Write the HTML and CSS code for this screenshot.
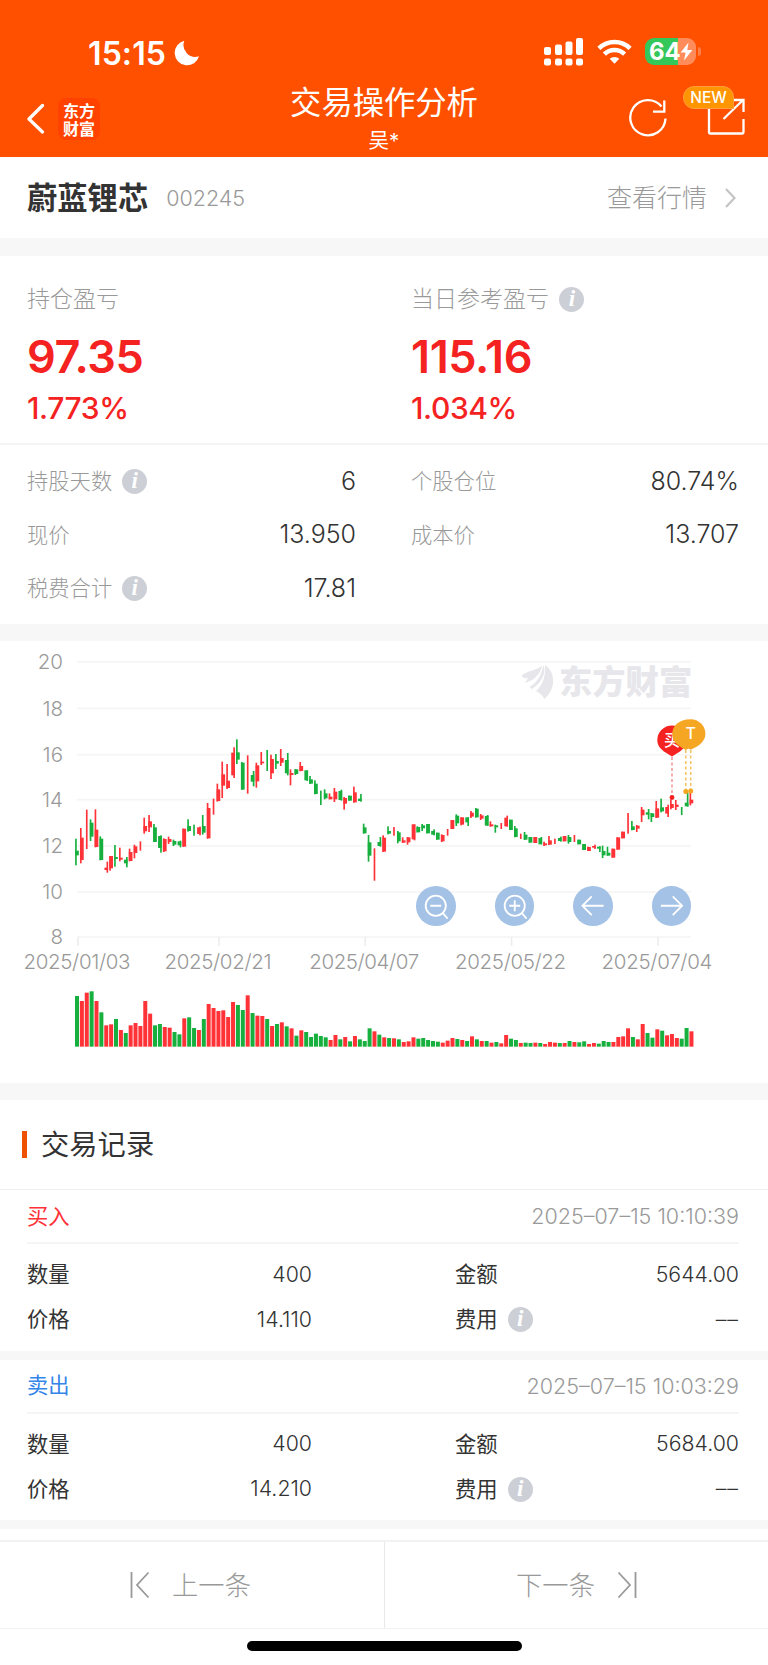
FILE: index.html
```html
<!DOCTYPE html>
<html lang="zh-CN">
<head>
  <meta charset="UTF-8">
  <meta name="viewport" content="width=device-width, initial-scale=1">
  <title>交易操作分析</title>
  <link rel="stylesheet" href="styles.css">
</head>
<body>
  <!-- 顶部 -->
  <header class="header">
    <div class="statusbar">
      <div class="clock">
        <span>15:15</span>
        <svg width="26" height="26" viewBox="0 0 26 26"><path fill="#fff" d="M10.3 .8A12.4 12.4 0 1 0 25 16.2 11.8 11.8 0 0 1 10.3 .8z"/></svg>
      </div>
      <div class="status-icons">
        <svg width="40" height="28" viewBox="0 0 40 28" fill="#fff">
          <rect x="0" y="9" width="7" height="8" rx="2"/><rect x="11" y="6.5" width="7" height="10.5" rx="2"/>
          <rect x="21.5" y="3.5" width="7" height="13.5" rx="2"/><rect x="32" y="0" width="7" height="17" rx="2"/>
          <rect x="0" y="20.5" width="7" height="7" rx="2"/><rect x="11" y="20.5" width="7" height="7" rx="2"/>
          <rect x="21.5" y="20.5" width="7" height="7" rx="2"/><rect x="32" y="20.5" width="7" height="7" rx="2"/>
        </svg>
        <svg class="wifi" width="35" height="26" viewBox="0 0 36 27" fill="none" stroke="#fff" stroke-width="4.6">
          <path d="M1.800 9.800a23 23 0 0 1 32.400 0"/><path d="M7.500 15.700a15 15 0 0 1 21 0"/>
          <path d="M18 25.600l-5-5a7.300 7.300 0 0 1 10 0z" fill="#fff" stroke="none"/>
        </svg>
        <div class="battery">
          <span class="battery-num">64</span>
          <svg width="13" height="19" viewBox="0 0 13 19"><path fill="#fff" d="M8.500 .5L.6 10.600h5L4 18.500l8.400-10.400H7.300z"/></svg>
        </div>
      </div>
    </div>
    <div class="navbar">
      <div class="nav-left">
        <svg width="18" height="32" viewBox="0 0 18 32" fill="none" stroke="#fff" stroke-width="3.2" stroke-linecap="round" stroke-linejoin="round"><path d="M15.500 2.500L2 16l13.500 13"/></svg>
        <div class="app-logo">东方财富</div>
      </div>
      <div class="nav-title">
        <h1>交易操作分析</h1>
        <p>吴*</p>
      </div>
      <div class="nav-right">
        <svg width="38" height="40" viewBox="0 0 38 40" fill="none" stroke="#fff" stroke-width="2.3">
          <path d="M36.500 20.500A17.600 17.600 0 1 1 32.500 8.500"/><path d="M35.300 2.500v11.200H24" />
        </svg>
        <div class="share">
          <svg width="38" height="38" viewBox="0 0 38 38" fill="none" stroke="#fff" stroke-width="2.3">
            <path d="M2 5v29q0 1.500 1.500 1.500h32q1 0 1-1.500V21"/><path d="M16.500 21L36 2"/><path d="M24 2h12.500v12"/>
          </svg>
          <span class="badge">NEW</span>
        </div>
      </div>
    </div>
  </header>

  <!-- 股票 -->
  <section class="stock">
    <h2>蔚蓝锂芯</h2>
    <span class="code">002245</span>
    <a class="more"><span>查看行情</span>
      <svg width="11" height="20" viewBox="0 0 11 20" fill="none" stroke="#c4c4c4" stroke-width="2.2"><path d="M1 1l8.500 9L1 19"/></svg>
    </a>
  </section>

  <!-- 盈亏 -->
  <section class="profit">
    <div class="profit-col">
      <div class="label">持仓盈亏</div>
      <div class="amount">97.35</div>
      <div class="rate">1.773%</div>
    </div>
    <div class="profit-col">
      <div class="label">当日参考盈亏 <i class="info">i</i></div>
      <div class="amount">115.16</div>
      <div class="rate">1.034%</div>
    </div>
  </section>
  <section class="details">
    <div class="pair"><span class="key">持股天数 <i class="info">i</i></span><span>6</span></div>
    <div class="pair"><span class="key">个股仓位</span><span>80.74%</span></div>
    <div class="pair"><span class="key">现价</span><span>13.950</span></div>
    <div class="pair"><span class="key">成本价</span><span>13.707</span></div>
    <div class="pair"><span class="key">税费合计 <i class="info">i</i></span><span>17.81</span></div>
  </section>

  <!-- K线图 -->
  <section class="chart">
    <svg id="kline" width="768" height="420" viewBox="0 0 768 420">
      <g id="grid"></g>
      <g class="watermark">
        <path d="M521.500 25.500c7-5 15-5.500 20.500-9.500-1.500 8-9 16-17.500 16.500 2.500-1.800 3.500-3.300 3-4.500-2 .4-5 .2-6-2.500z"/>
        <path d="M543.500 15c3 8-2 19-13.500 25 3-1.500-1-2.500 0-3.500 7-3 12-13 13.500-21.500z" />
        <path d="M545 15c6 4 9 11 8 19-1 6-4 11-8.500 15-2-4-5-6-8.500-8 6-5 10-14 9-26z"/>
        <text x="559" y="44">东方财富</text>
      </g>
      <g id="candles" transform="scale(.33333)"></g>
      <g id="volume" transform="scale(.33333)"></g>
      <g class="pin-buy">
        <path class="leader" d="M672 107v40"/>
        <circle cx="672" cy="147.500" r="2.400"/>
        <path d="M672 75.500a14.700 14.700 0 0 1 14.700 14.700c0 8-7 11.500-14.700 16.300-7.700-4.800-14.700-8.300-14.700-16.300A14.700 14.700 0 0 1 672 75.500z"/>
        <text x="672" y="96">买</text>
      </g>
      <g class="pin-t">
        <path class="leader" d="M685.800 100v40M690.700 100v40"/>
        <circle cx="685.800" cy="141.500" r="2.500"/><circle cx="690.700" cy="141" r="2.500"/>
        <path d="M690.700 69.200a14.700 14.700 0 0 1 14.700 14.700c0 7-6 11.500-11.900 14.400l-2.600 1.500-2.500-1.200-2.600 1.400c-4-3-13.600-6.500-13.600-15.600 0-8 6-15.200 18.500-15.200z"/>
        <text x="690.700" y="89">T</text>
      </g>
    </svg>
    <div class="tools">
      <button><svg viewBox="0 0 40 40"><circle cx="20" cy="20" r="10.200"/><path d="M27.200 27.500l4.800 5.500M14.500 20h11"/></svg></button>
      <button><svg viewBox="0 0 40 40"><circle cx="20" cy="20" r="10.200"/><path d="M27.200 27.500l4.800 5.500M14.500 20h11M20 14.500v11"/></svg></button>
      <button><svg viewBox="0 0 40 40"><path d="M31 20H9.500M19 10.500L9.500 20l9.500 9.500"/></svg></button>
      <button><svg viewBox="0 0 40 40"><path d="M9 20h21.500M21 10.500l9.500 9.500-9.500 9.500"/></svg></button>
    </div>
  </section>

  <!-- 交易记录 -->
  <section class="records">
    <h3><span>交易记录</span></h3>
    <article class="record">
      <div class="record-head"><span class="buy">买入</span><time>2025–07–15 10:10:39</time></div>
      <div class="record-body">
        <div class="pair"><span class="key">数量</span><span>400</span></div>
        <div class="pair"><span class="key">金额</span><span>5644.00</span></div>
        <div class="pair"><span class="key">价格</span><span>14.110</span></div>
        <div class="pair"><span class="key">费用 <i class="info">i</i></span><span class="empty">––</span></div>
      </div>
    </article>
    <article class="record">
      <div class="record-head"><span class="sell">卖出</span><time>2025–07–15 10:03:29</time></div>
      <div class="record-body">
        <div class="pair"><span class="key">数量</span><span>400</span></div>
        <div class="pair"><span class="key">金额</span><span>5684.00</span></div>
        <div class="pair"><span class="key">价格</span><span>14.210</span></div>
        <div class="pair"><span class="key">费用 <i class="info">i</i></span><span class="empty">––</span></div>
      </div>
    </article>
  </section>

  <footer class="pager">
    <a><svg width="20" height="28" viewBox="0 0 20 28"><path d="M1.500 1v26M18.500 1.500L7 14l11.500 12.500"/></svg><span>上一条</span></a>
    <a><span>下一条</span><svg width="20" height="28" viewBox="0 0 20 28"><path d="M18.500 1v26M1.500 1.500L13 14 1.500 26.500"/></svg></a>
  </footer>
  <div class="home-indicator"></div>

  <script src="chart.js"></script>
</body>
</html>
```

FILE: styles.css
```css
:root {
  --primary: #ff5000;
  --red: #f52222;
  --text: #333;
  --gray: #999;
  --line: #f5f5f5;
  --band: #f7f7f7;
}
* { box-sizing: border-box; }
html, body {
  margin: 0;
  padding: 0;
  font-family: Inter, "Noto Sans CJK SC", sans-serif;
  font-weight: 300;
  background: #fff;
  color: var(--text);
}
body {
  width: 768px;
  height: 1665px;
  overflow: hidden;
}
h1, h2, h3, p { margin: 0; }

/* ───────── 顶部 ───────── */
.header {
  height: 157px;
  padding-top: 36px;
  background: var(--primary);
  color: #fff;
}
.statusbar {
  display: flex;
  justify-content: space-between;
  height: 34px;
  padding: 0 72px 0 88px;
}
.clock {
  display: flex;
  align-items: center;
  gap: 8px;
  font-size: 32px;
  font-weight: 600;
  letter-spacing: 0.1px;
}
.status-icons {
  display: flex;
  align-items: center;
  height: 31px;
}
.wifi { margin: 0 13px; }
.battery {
  position: relative;
  display: flex;
  align-items: center;
  width: 51px;
  height: 27px;
  padding-left: 4px;
  border-radius: 9px;
  background: linear-gradient(90deg, #34c759 64%, #ff8c5a 64%);
}
.battery::after {
  content: "";
  position: absolute;
  left: 53px;
  top: 9px;
  width: 3px;
  height: 9px;
  border-radius: 0 3px 3px 0;
  background: #ff7d47;
}
.battery-num {
  font-size: 24px;
  font-weight: 700;
  letter-spacing: -0.2px;
}
.navbar {
  display: grid;
  grid-template-columns: 1fr 220px 1fr;
  height: 87px;
}
.nav-left {
  display: flex;
  align-items: center;
  gap: 13px;
  height: 97px;
  padding-left: 27px;
}
.app-logo {
  width: 42px;
  height: 42px;
  padding: 3px 5px;
  border-radius: 8px;
  background: #ff4200;
  font-family: "Noto Sans CJK SC", sans-serif;
  font-size: 16px;
  font-weight: 700;
  line-height: 18px;
  word-break: break-all;
}
.nav-title {
  padding-top: 10px;
  text-align: center;
}
.nav-title h1 {
  margin: 0 -5px;
  font-size: 31.3px;
  font-weight: 400;
  line-height: 46px;
}
.nav-title p {
  font-size: 20.5px;
  font-weight: 400;
  line-height: 30px;
}
.nav-right {
  display: flex;
  justify-content: flex-end;
  gap: 40px;
  padding: 28px 23px 0 0;
}
.share { position: relative; }
.badge {
  position: absolute;
  left: -24px;
  top: -12px;
  width: 51px;
  height: 23px;
  border: 1px solid #ff9c3c;
  border-radius: 11px 11px 0 11px;
  background: #ff9500;
  font-size: 15.5px;
  font-weight: 500;
  line-height: 22px;
  text-align: center;
}

/* ───────── 股票 ───────── */
.stock {
  display: flex;
  align-items: center;
  height: 99px;
  padding: 0 32px 0 27px;
  border-bottom: 18px solid var(--band);
}
.stock h2 {
  padding-bottom: 4px;
  font-size: 30.3px;
  font-weight: 700;
}
.code {
  margin-left: 18px;
  font-size: 21.5px;
}
.code, .more { color: var(--gray); }
.more {
  display: flex;
  align-items: center;
  gap: 18px;
  margin-left: auto;
  font-size: 25px;
}
.more span { padding-bottom: 3px; }

/* ───────── 盈亏 ───────── */
.info {
  display: inline-block;
  width: 25px;
  height: 25px;
  margin-left: 4px;
  border-radius: 50%;
  background: #cccfd5;
  color: #fff;
  font-family: "Liberation Serif", serif;
  font-size: 23px;
  font-weight: 700;
  line-height: 24px;
  text-align: center;
  vertical-align: 1px;
}
.profit {
  display: grid;
  grid-template-columns: 384px 384px;
  height: 189px;
  padding-top: 26px;
  border-bottom: 2px solid var(--line);
}
.profit-col { padding-left: 27px; }
.label {
  height: 34px;
  font-size: 23px;
  line-height: 34px;
  color: var(--gray);
}
.amount {
  height: 78px;
  font-size: 45px;
  font-weight: 600;
  letter-spacing: -0.4px;
  line-height: 81px;
  color: var(--red);
}
.rate {
  font-size: 30px;
  font-weight: 500;
  letter-spacing: -0.4px;
  line-height: 29px;
  color: var(--red);
}
.details {
  display: grid;
  grid-template-columns: 329px 328px;
  grid-auto-rows: 53.6px;
  column-gap: 55px;
  height: 196px;
  padding: 9px 29px 0 27px;
  border-bottom: 17px solid var(--band);
}
.pair {
  display: flex;
  justify-content: space-between;
  align-items: center;
}
.details .pair { font-size: 25px; }
.details .key {
  font-size: 21.3px;
  color: var(--gray);
}
.key { padding-bottom: 2px; }

/* ───────── K线图 ───────── */
.chart {
  position: relative;
  height: 459px;
  padding-top: 9px;
  border-bottom: 17px solid var(--band);
}
.chart > svg { display: block; }
.axis {
  font-size: 20.5px;
  fill: var(--gray);
}
.watermark { fill: #e6e6eb; }
.watermark text {
  font-family: "Noto Sans CJK SC", sans-serif;
  font-size: 33.3px;
  font-weight: 900;
}
.up { fill: #ff3238; }
.down { fill: #17b03e; }
.leader {
  fill: none;
  stroke-width: 1.6;
  stroke-dasharray: 3 2.5;
}
.pin-buy { fill: var(--red); }
.pin-buy .leader { stroke: #f79a9a; }
.pin-t { fill: #f5a623; }
.pin-t .leader { stroke: #f5c468; }
.pin-buy text, .pin-t text {
  fill: #fff;
  font-size: 16px;
  font-weight: 500;
  text-anchor: middle;
}
.tools {
  position: absolute;
  left: 416px;
  top: 245px;
  display: flex;
  gap: 39px;
}
.tools button {
  width: 39.5px;
  height: 39.5px;
  padding: 0;
  border: none;
  border-radius: 50%;
  background: #a4c2e5;
}
.tools svg {
  display: block;
  fill: none;
  stroke: #fff;
  stroke-width: 1.8;
}

/* ───────── 交易记录 ───────── */
.records h3 {
  display: flex;
  align-items: center;
  gap: 14px;
  height: 90px;
  padding-left: 22px;
  border-bottom: 1px solid #f0f0f0;
  font-size: 28.3px;
  font-weight: 400;
}
.records h3::before {
  content: "";
  width: 5px;
  height: 27px;
  background: #ee5200;
}
.records h3 span { padding-bottom: 4px; }
.record {
  height: 169.5px;
  padding: 0 29px 0 27px;
  border-bottom: 9px solid var(--band);
  font-size: 21.3px;
}
.record-head {
  display: flex;
  justify-content: space-between;
  align-items: center;
  height: 54px;
  border-bottom: 2px solid var(--line);
}
.record-head span { padding-bottom: 4px; }
.record-head time {
  font-size: 21.5px;
  color: var(--gray);
}
.buy { color: #ff3238; }
.sell { color: #3385e8; }
.record-body {
  display: grid;
  grid-template-columns: 285px 284px;
  grid-auto-rows: 45px;
  column-gap: 143px;
  padding-top: 7px;
}
.record-body, .record-head span { font-weight: 400; }
.record-body .pair > span:last-child { font-weight: 300; }
.empty { letter-spacing: 1px; }

/* ───────── 底部 ───────── */
.pager {
  display: grid;
  grid-template-columns: 1fr 1fr;
  height: 89px;
  margin-top: 11px;
  border-top: 2px solid #f2f2f2;
  border-bottom: 1px solid #f2f2f2;
}
.pager a {
  display: flex;
  justify-content: center;
  align-items: center;
  gap: 22px;
  padding-right: 3px;
  font-size: 26.3px;
  color: var(--gray);
}
.pager a + a {
  padding-right: 0;
  border-left: 1px solid #e8e8e8;
}
.pager span { padding-bottom: 3px; }
.pager svg {
  fill: none;
  stroke: var(--gray);
  stroke-width: 1.8;
}
.home-indicator {
  width: 275px;
  height: 10px;
  margin: 12px auto 0;
  border-radius: 5px;
  background: #000;
}
```

FILE: chart.js
```js
const NS = 'http://www.w3.org/2000/svg';

function add(parent, tag, attrs, text){
  const el = document.createElementNS(NS, tag);
  for(const k in attrs) el.setAttribute(k, attrs[k]);
  if(text) el.textContent = text;
  document.getElementById(parent).appendChild(el);
}

/* --- 坐标轴 --- */
[[20,11.7],[18,58.3],[16,104.6],[14,149.6],[12,195.8],[10,242],[8,287]].forEach(([v, y]) => {
  add('grid', 'rect', {x:77, y:y - .8, width:614, height:1.7, fill:'#f5f5f5'});
  add('grid', 'text', {x:63, y:y + 7.3, 'text-anchor':'end', class:'axis'}, String(v));
});
[['2025/01/03',78,107],['2025/02/21',219,107],['2025/04/07',365.2,110],['2025/05/22',511.6,111],['2025/07/04',658,111]].forEach(([d, x, w]) => {
  add('grid', 'rect', {x:x - .8, y:287, width:1.6, height:9, fill:'#ededed'});
  add('grid', 'text', {x:x - w / 2 - 1, y:319, textLength:w, class:'axis'}, d);
});

/* --- K线: 颜色 影线位置 影线上 影线下 实体上 实体下 成交量 --- */
const data = `
g l 566 646 602 616 152
r l 534 640 563 630 137
r c 479 597 0 0 162
g l 508 573 518 560 166
r l 478 592 539 591 137
g l 559 631 566 630 103
r r 635 668 653 660 64
r l 618 662 618 655 67
g l 585 650 621 627 83
r l 593 634 623 629 50
g r 621 652 629 640 41
r l 596 634 606 633 64
r l 584 625 589 609 71
r c 574 602 0 0 62
r l 503 551 528 544 137
r l 495 546 514 532 99
g l 522 576 532 576 64
g r 556 608 558 594 68
r l 565 606 567 604 59
r l 560 582 567 576 57
g l 569 588 573 584 44
g r 572 592 574 586 37
r l 536 590 536 590 85
g l 508 545 528 543 88
g c 524 557 0 0 56
r r 530 556 532 552 50
g l 495 554 528 548 83
r l 459 566 474 565 128
r c 446 494 0 0 116
r l 401 455 418 453 107
r l 335 444 373 407 109
r l 342 417 392 414 89
r r 292 384 308 376 134
g l 268 342 307 329 125
g l 336 419 338 419 110
r c 316 431 0 0 154
g r 363 409 375 395 101
r l 338 413 346 394 93
r l 306 345 335 340 92
g c 300 363 0 0 83
r l 314 387 327 370 62
g l 312 357 333 341 68
r l 297 348 324 338 73
g r 309 376 330 370 61
r l 358 406 369 375 55
g l 357 375 358 372 33
r l 336 364 348 363 49
g r 361 393 361 391 44
g l 378 402 388 401 29
g l 391 433 401 432 39
g c 422 465 0 0 32
g l 418 448 430 445 28
r l 430 448 440 448 20
r l 414 456 425 448 35
g r 419 452 423 450 22
r l 441 479 444 461 29
g l 437 452 437 452 16
r l 410 458 427 457 32
g r 432 455 446 453 22
g l 521 551 532 550 17
g l 555 635 577 617 55
r c 595 692 0 0 46
g r 561 590 576 588 36
r l 556 606 563 605 28
g l 529 553 543 551 26
r c 531 557 0 0 25
g l 543 580 547 574 22
r l 562 579 571 578 14
r l 561 584 562 577 16
r r 523 571 523 568 28
g l 529 547 531 547 24
g l 522 543 526 535 26
g l 522 550 522 550 20
g r 538 556 543 554 17
g l 548 569 548 569 15
r l 553 576 555 574 12
r c 537 557 0 0 18
r l 510 537 510 537 26
g l 493 528 497 520 23
r l 502 526 502 524 20
g r 502 528 502 517 17
r l 483 504 488 500 31
g l 474 503 476 502 22
r l 492 510 496 506 17
g r 495 527 498 527 17
r l 514 530 523 529 12
g l 524 548 526 532 14
r c 519 537 0 0 10
r r 497 530 503 529 35
g l 509 540 509 540 24
g l 528 562 535 561 20
r c 551 567 0 0 11
g l 546 570 554 569 12
g l 561 578 561 578 11
r l 561 579 561 579 12
g r 561 583 564 583 11
r l 575 588 580 586 8
r l 558 585 571 584 14
r c 566 582 0 0 12
g r 560 575 564 573 11
r l 558 574 558 574 11
g l 555 581 561 576 17
r c 555 576 0 0 14
g l 569 583 569 583 13
g l 582 600 582 600 16
r l 590 603 591 603 8
r r 584 597 588 593 11
g r 589 606 590 596 9
g l 587 624 603 616 17
g l 590 617 608 617 14
r l 596 623 596 623 14
r l 562 599 562 599 29
r l 545 565 545 565 31
r c 489 551 0 0 55
g l 513 541 529 540 29
r l 525 546 527 536 22
r l 471 516 479 496 68
g r 477 508 487 494 41
g l 489 516 490 501 27
r l 453 504 475 503 52
g l 446 487 472 484 48
r r 464 501 471 491 34
r l 448 478 462 474 38
r l 450 480 464 471 26
g c 471 495 0 0 24
g r 428 470 458 469 56
r l 428 466 449 460 46`;

data.trim().split('\n').forEach((line, i) => {
  const [c, side, high, low, top, bottom, vol] = line.split(' ');
  const cls = c === 'r' ? 'up' : 'down';
  const x = 231 + i * 14.63;
  const wick = {l:x - 3.2, c:x, r:x + 3.2}[side];
  add('candles', 'rect', {x:wick - 2.5, y:high, width:5, height:low - high, class:cls});
  if(side !== 'c') add('candles', 'rect', {x:x - 5.5, y:top, width:11, height:bottom - top, class:cls});
  add('volume', 'rect', {x:x - 6, y:1190 - vol, width:12, height:vol, class:cls});
});
```
